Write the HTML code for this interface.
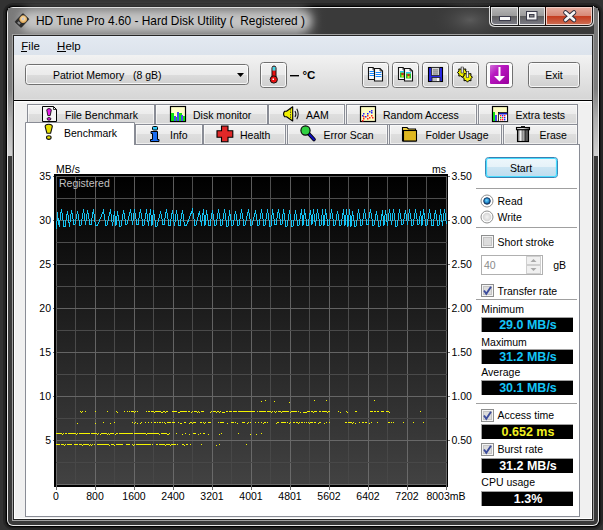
<!DOCTYPE html><html><head><meta charset="utf-8"><style>html,body{margin:0;padding:0;width:603px;height:530px;overflow:hidden;background:#313131}</style></head><body><svg width="603" height="530" viewBox="0 0 603 530" style="display:block;white-space:pre;font-family:'Liberation Sans', sans-serif">

<defs>
<linearGradient id="gChart" x1="0" y1="0" x2="0" y2="1"><stop offset="0" stop-color="#000"/><stop offset="1" stop-color="#424242"/></linearGradient>
<linearGradient id="gSide" x1="0" y1="0" x2="0" y2="1"><stop offset="0" stop-color="#7a7a7a"/><stop offset="1" stop-color="#cdcdcd"/></linearGradient>
<linearGradient id="gMenu" x1="0" y1="0" x2="0" y2="1"><stop offset="0" stop-color="#e3e9f1"/><stop offset="1" stop-color="#dce3ec"/></linearGradient>
<linearGradient id="gTool" x1="0" y1="0" x2="0" y2="1"><stop offset="0" stop-color="#f2f2f2"/><stop offset="1" stop-color="#d5d5d5"/></linearGradient>
<linearGradient id="gBtn" x1="0" y1="0" x2="0" y2="1"><stop offset="0" stop-color="#f2f2f2"/><stop offset="0.5" stop-color="#ebebeb"/><stop offset="0.5" stop-color="#dddddd"/><stop offset="1" stop-color="#cfcfcf"/></linearGradient>
<linearGradient id="gTab" x1="0" y1="0" x2="0" y2="1"><stop offset="0" stop-color="#f3f3f3"/><stop offset="0.5" stop-color="#ebebeb"/><stop offset="0.5" stop-color="#dedede"/><stop offset="1" stop-color="#d6d6d6"/></linearGradient>
<linearGradient id="gStart" x1="0" y1="0" x2="0" y2="1"><stop offset="0" stop-color="#eef7fc"/><stop offset="0.45" stop-color="#e6f2f9"/><stop offset="0.5" stop-color="#cce5f3"/><stop offset="1" stop-color="#bddcee"/></linearGradient>
<linearGradient id="gClose" x1="0" y1="0" x2="0" y2="1"><stop offset="0" stop-color="#e8a493"/><stop offset="0.45" stop-color="#d5735c"/><stop offset="0.55" stop-color="#c23c1c"/><stop offset="1" stop-color="#d8785a"/></linearGradient>
<linearGradient id="gMinMax" x1="0" y1="0" x2="0" y2="1"><stop offset="0" stop-color="#a4a4a4"/><stop offset="0.45" stop-color="#8c8c8c"/><stop offset="0.55" stop-color="#5a5a5a"/><stop offset="1" stop-color="#7a7a80"/></linearGradient>
<filter id="blur6" x="-50%" y="-50%" width="200%" height="200%"><feGaussianBlur stdDeviation="5"/></filter>
<radialGradient id="gDisk" cx="0.45" cy="0.45" r="0.55"><stop offset="0" stop-color="#c8ccd8"/><stop offset="0.25" stop-color="#c0c4d0"/><stop offset="0.35" stop-color="#f8d8a0"/><stop offset="1" stop-color="#d8a050"/></radialGradient>
</defs>
<rect x="0" y="0" width="603" height="530" fill="#323232" />
<rect x="3" y="3" width="600" height="527" rx="10" fill="#262626"/>
<rect x="5" y="5" width="596" height="523" rx="8" fill="#1a1a1a"/>
<rect x="6" y="6" width="594" height="521" rx="7" fill="#000"/>
<rect x="7" y="7" width="592" height="519" rx="6" fill="#e8e8e8"/>
<rect x="8" y="8" width="590" height="517" rx="5" fill="#3a3a3a"/>
<defs><linearGradient id="gSide2" gradientUnits="userSpaceOnUse" x1="0" y1="8" x2="0" y2="155"><stop offset="0" stop-color="#787878"/><stop offset="0.55" stop-color="#7e7e7e"/><stop offset="0.75" stop-color="#adadad"/><stop offset="1" stop-color="#d0d0d0"/></linearGradient><radialGradient id="gStreak" cx="0.5" cy="0.5" r="0.5"><stop offset="0" stop-color="#5a5a5a"/><stop offset="1" stop-color="#3a3a3a" stop-opacity="0"/></radialGradient><linearGradient id="gMM" x1="0" y1="0" x2="0" y2="1"><stop offset="0" stop-color="#b4b4b4"/><stop offset="0.47" stop-color="#9c9c9c"/><stop offset="0.5" stop-color="#5c5c5c"/><stop offset="1" stop-color="#7a7a84"/></linearGradient><linearGradient id="gCl" x1="0" y1="0" x2="0" y2="1"><stop offset="0" stop-color="#e4aa9c"/><stop offset="0.47" stop-color="#d88a78"/><stop offset="0.5" stop-color="#c43a1c"/><stop offset="1" stop-color="#cc6a50"/></linearGradient></defs>
<path d="M8 13 a5 5 0 0 1 5 -5 V156 H8 Z" fill="url(#gSide2)"/>
<rect x="8" y="8" width="4" height="148" fill="url(#gSide2)" />
<rect x="594" y="8" width="4" height="148" fill="url(#gSide2)" />
<ellipse cx="470" cy="20" rx="40" ry="22" fill="url(#gStreak)"/>
<defs><linearGradient id="gTB" x1="0" y1="0" x2="1" y2="0"><stop offset="0" stop-color="#7a7a7a"/><stop offset="0.9" stop-color="#6a6a6a"/><stop offset="1" stop-color="#3a3a3a" stop-opacity="0"/></linearGradient></defs>
<rect x="8" y="8" width="320" height="26" fill="url(#gTB)" />
<rect x="20" y="10" width="292" height="22" rx="11" fill="#c4c4c4" filter="url(#blur6)"/>
<rect x="12" y="34" width="582" height="487" fill="#a0a0a0" />
<rect x="13" y="35" width="580" height="485" fill="#252525" />
<rect x="14" y="36" width="578" height="483" fill="#ffffff" />
<rect x="15" y="37" width="576" height="481" fill="#f0f0f0" />
<rect x="14" y="36" width="578" height="1" fill="#e9eff8" />
<rect x="14" y="37" width="578" height="18" fill="url(#gMenu)" />
<rect x="14" y="55" width="578" height="45" fill="url(#gTool)" />
<rect x="14" y="99" width="578" height="1" fill="#e2e2e2" />
<rect x="14" y="100" width="578" height="1" fill="#000" />
<rect x="14" y="101" width="578" height="1" fill="#fff" />
<rect x="14" y="102" width="578" height="1" fill="#f5f5f5" />
<text x="36" y="24.7" font-size="11.9" fill="#000" font-weight="400" text-anchor="start" >HD Tune Pro 4.60 - Hard Disk Utility ( &#160;Registered )</text>
<g transform="translate(22,20.5) rotate(43)"><rect x="-4.2" y="-5.8" width="8.4" height="11.6" rx="0.8" fill="#2c2c2c" stroke="#1a1a1a" stroke-width="0.6"/><circle cx="0" cy="-1.8" r="3.7" fill="url(#gDisk)"/><rect x="-2" y="2.8" width="3" height="2.2" fill="#888"/></g>
<path d="M489 6 H594 V22 a5 5 0 0 1 -5 5 H494 a5 5 0 0 1 -5 -5 Z" fill="#d8d8d8"/>
<path d="M490 6 H593 V21 a5 5 0 0 1 -5 5 H495 a5 5 0 0 1 -5 -5 Z" fill="#1a1a1a"/>
<rect x="490" y="6" width="103" height="1" fill="#000" />
<path d="M491 7 H518 V25 H495 a4 4 0 0 1 -4 -4 Z" fill="#e6e6e6"/>
<path d="M492 8 H517 V24 H495 a3 3 0 0 1 -3 -3 Z" fill="url(#gMM)"/>
<rect x="518" y="7" width="1" height="19" fill="#1a1a1a" />
<rect x="519" y="7" width="26" height="18" fill="#e6e6e6" />
<rect x="520" y="8" width="24" height="16" fill="url(#gMM)" />
<rect x="545" y="7" width="1" height="19" fill="#2a0a04" />
<path d="M546 7 H592 V21 a4 4 0 0 1 -4 4 H546 Z" fill="#f0d0c8"/>
<path d="M547 8 H591 V21 a3 3 0 0 1 -3 3 H547 Z" fill="url(#gCl)"/>
<rect x="499" y="16" width="12" height="5" fill="#3a3a4a" />
<rect x="500" y="17" width="10" height="3" fill="#f8f8f8" />
<rect x="526" y="11" width="11.5" height="9.5" fill="#3a3a4a"/>
<rect x="527" y="12" width="9.5" height="7.5" fill="#f4f4f4" />
<rect x="529" y="14" width="5.5" height="3.5" fill="#3a3a4a" />
<rect x="530" y="15" width="3.5" height="1.5" fill="#8a8a8a" />
<path d="M565.5 12.5 L574 20 M574 12.5 L565.5 20" stroke="#2a2a3a" stroke-width="4.6" stroke-linecap="round"/>
<path d="M565.5 12.5 L574 20 M574 12.5 L565.5 20" stroke="#f6f6f6" stroke-width="2.8" stroke-linecap="round"/>
<text x="21.3" y="49.9" font-size="11.5" fill="#000" font-weight="400" text-anchor="start" >File</text>
<rect x="21" y="51" width="6" height="1" fill="#000" />
<text x="57.1" y="49.9" font-size="11.5" fill="#000" font-weight="400" text-anchor="start" >Help</text>
<rect x="57" y="51" width="9" height="1" fill="#000" />
<rect x="25.5" y="64.5" width="223" height="20" rx="3" fill="url(#gBtn)" stroke="#707070"/>
<rect x="26.5" y="65.5" width="221" height="18" rx="2" fill="none" stroke="#fff" stroke-opacity="0.8"/>
<text x="53" y="78.9" font-size="10.5" fill="#000" font-weight="400" text-anchor="start" >Patriot Memory &#160; (8 gB)</text>
<path d="M237 73 L244 73 L240.5 77 Z" fill="#000"/>
<rect x="260.5" y="62.5" width="26" height="25" rx="3" fill="url(#gBtn)" stroke="#707070"/>
<rect x="261.5" y="63.5" width="24" height="23" rx="2" fill="none" stroke="#fff" stroke-opacity="0.8"/>
<path d="M272 78 V68 a2 2 0 0 1 4 0 V78" fill="#e81010" stroke="#111" stroke-width="1"/>
<rect x="272.5" y="66.8" width="3" height="3.8" fill="#40d8e8"/>
<circle cx="273.8" cy="79.5" r="3.6" fill="#e81010" stroke="#111" stroke-width="1"/>
<rect x="272.5" y="78.5" width="1.5" height="1.5" fill="#fff" />
<rect x="290" y="75" width="9" height="1.4" fill="#000" />
<text x="302.5" y="79.4" font-size="11.5" fill="#000" font-weight="700" text-anchor="start" >°C</text>
<rect x="362.5" y="62.5" width="26" height="25" rx="3" fill="url(#gBtn)" stroke="#707070"/>
<rect x="363.5" y="63.5" width="24" height="23" rx="2" fill="none" stroke="#fff" stroke-opacity="0.8"/>
<rect x="392.5" y="62.5" width="26" height="25" rx="3" fill="url(#gBtn)" stroke="#707070"/>
<rect x="393.5" y="63.5" width="24" height="23" rx="2" fill="none" stroke="#fff" stroke-opacity="0.8"/>
<rect x="422.5" y="62.5" width="26" height="25" rx="3" fill="url(#gBtn)" stroke="#707070"/>
<rect x="423.5" y="63.5" width="24" height="23" rx="2" fill="none" stroke="#fff" stroke-opacity="0.8"/>
<rect x="452.5" y="62.5" width="26" height="25" rx="3" fill="url(#gBtn)" stroke="#707070"/>
<rect x="453.5" y="63.5" width="24" height="23" rx="2" fill="none" stroke="#fff" stroke-opacity="0.8"/>
<rect x="486.5" y="62.5" width="26" height="25" rx="3" fill="#fbfbfb" stroke="#707070"/>
<rect x="487.5" y="63.5" width="24" height="23" rx="2" fill="none" stroke="#fff" stroke-opacity="0.8"/>
<defs><linearGradient id="gPurp" x1="0" y1="0" x2="1" y2="1"><stop offset="0" stop-color="#d070d8"/><stop offset="0.35" stop-color="#b818c0"/><stop offset="1" stop-color="#9a009e"/></linearGradient><linearGradient id="gGear" x1="0" y1="0" x2="1" y2="0"><stop offset="0" stop-color="#808080"/><stop offset="0.5" stop-color="#f4f4f4"/><stop offset="1" stop-color="#707070"/></linearGradient></defs>
<path d="M368.5 67.5 H373 L375.5 70 V79.5 H368.5 Z" fill="#fafafa" stroke="#111" stroke-width="1.1"/>
<path d="M373 67.5 V70 H375.5" fill="none" stroke="#111" stroke-width="0.7"/>
<line x1="370" y1="71.5" x2="374" y2="71.5" stroke="#1a88ff" stroke-width="1.1" stroke-linecap="round"/>
<line x1="370" y1="73.5" x2="374" y2="73.5" stroke="#1a88ff" stroke-width="1.1" stroke-linecap="round"/>
<line x1="370" y1="75.5" x2="374" y2="75.5" stroke="#1a88ff" stroke-width="1.1" stroke-linecap="round"/>
<path d="M374.5 68.5 H380 L382.5 71 V81.0 H374.5 Z" fill="#fafafa" stroke="#111" stroke-width="1.1"/>
<path d="M380 68.5 V71 H382.5" fill="none" stroke="#111" stroke-width="0.7"/>
<line x1="376" y1="72.5" x2="381" y2="72.5" stroke="#1a88ff" stroke-width="1.1" stroke-linecap="round"/>
<line x1="376" y1="74.5" x2="381" y2="74.5" stroke="#1a88ff" stroke-width="1.1" stroke-linecap="round"/>
<line x1="376" y1="76.5" x2="381" y2="76.5" stroke="#1a88ff" stroke-width="1.1" stroke-linecap="round"/>
<path d="M398.5 67.5 H403 L405.5 70 V79.5 H398.5 Z" fill="#fafafa" stroke="#111" stroke-width="1.1"/>
<path d="M403 67.5 V70 H405.5" fill="none" stroke="#111" stroke-width="0.7"/>
<rect x="400" y="71" width="4" height="1.5" fill="#30c8f0" />
<rect x="400" y="72.5" width="4" height="5" fill="#20c020" />
<rect x="401.5" y="73" width="2" height="2" fill="#e02020" />
<rect x="401.5" y="75" width="2" height="2" fill="#d8d820" />
<path d="M404.5 68.5 H410 L412.5 71 V81.0 H404.5 Z" fill="#fafafa" stroke="#111" stroke-width="1.1"/>
<path d="M410 68.5 V71 H412.5" fill="none" stroke="#111" stroke-width="0.7"/>
<rect x="406" y="72" width="5" height="1.5" fill="#30c8f0" />
<rect x="406" y="73.5" width="5" height="5" fill="#20c020" />
<rect x="407.5" y="74" width="2" height="2" fill="#e02020" />
<rect x="407.5" y="76" width="2" height="2" fill="#d8d820" />
<rect x="428.5" y="67.5" width="14" height="14" fill="#2828e8" stroke="#000" stroke-width="1.1"/>
<rect x="431.5" y="67.5" width="8" height="8" fill="#d4d4d4" stroke="#222" stroke-width="0.8"/>
<rect x="433" y="69.5" width="5" height="0.9" fill="#666" />
<rect x="433" y="71.5" width="5" height="0.9" fill="#666" />
<rect x="433" y="73.5" width="5" height="0.9" fill="#666" />
<rect x="432" y="77.5" width="8" height="4" fill="#c0c0c0" stroke="#222" stroke-width="0.8"/>
<rect x="437" y="78" width="2" height="3" fill="#fff" />
<polygon points="467.30,72.50 465.63,73.88 465.84,76.04 463.68,75.83 462.30,77.50 460.92,75.83 458.76,76.04 458.97,73.88 457.30,72.50 458.97,71.12 458.76,68.96 460.92,69.17 462.30,67.50 463.68,69.17 465.84,68.96 465.63,71.12" fill="#f0f000" stroke="#000" stroke-width="1"/>
<rect x="461.0" y="67.0" width="2.6" height="6" fill="url(#gGear)" stroke="#222" stroke-width="0.5"/>
<polygon points="472.50,77.20 470.83,78.58 471.04,80.74 468.88,80.53 467.50,82.20 466.12,80.53 463.96,80.74 464.17,78.58 462.50,77.20 464.17,75.82 463.96,73.66 466.12,73.87 467.50,72.20 468.88,73.87 471.04,73.66 470.83,75.82" fill="#f0f000" stroke="#000" stroke-width="1"/>
<rect x="466.2" y="71.7" width="2.6" height="6" fill="url(#gGear)" stroke="#222" stroke-width="0.5"/>
<rect x="490" y="65" width="19" height="19" rx="1" fill="url(#gPurp)"/>
<path d="M498.5 67 H500.5 V76 H505 L499.5 81.5 L494 76 H498.5 Z" fill="#fff"/>
<rect x="528.5" y="62.5" width="51" height="25" rx="3" fill="url(#gBtn)" stroke="#707070"/>
<rect x="529.5" y="63.5" width="49" height="23" rx="2" fill="none" stroke="#fff" stroke-opacity="0.8"/>
<text x="554" y="78.5" font-size="10.5" fill="#000" font-weight="400" text-anchor="middle" >Exit</text>
<rect x="25" y="144" width="555" height="373" fill="#fff" />
<rect x="25.5" y="144.5" width="554" height="372" fill="none" stroke="#898c95"/>
<rect x="27.5" y="104.5" width="127" height="20" fill="url(#gTab)" stroke="#898c95"/>
<rect x="28.5" y="105.5" width="125" height="18" fill="none" stroke="#fff" stroke-opacity="0.6"/>
<text x="65" y="118.7" font-size="10.5" fill="#000" font-weight="400" text-anchor="start" >File Benchmark</text>
<rect x="155.5" y="104.5" width="112" height="20" fill="url(#gTab)" stroke="#898c95"/>
<rect x="156.5" y="105.5" width="110" height="18" fill="none" stroke="#fff" stroke-opacity="0.6"/>
<text x="193" y="118.7" font-size="10.5" fill="#000" font-weight="400" text-anchor="start" >Disk monitor</text>
<rect x="268.5" y="104.5" width="76" height="20" fill="url(#gTab)" stroke="#898c95"/>
<rect x="269.5" y="105.5" width="74" height="18" fill="none" stroke="#fff" stroke-opacity="0.6"/>
<text x="306" y="118.7" font-size="10.5" fill="#000" font-weight="400" text-anchor="start" >AAM</text>
<rect x="346.5" y="104.5" width="130" height="20" fill="url(#gTab)" stroke="#898c95"/>
<rect x="347.5" y="105.5" width="128" height="18" fill="none" stroke="#fff" stroke-opacity="0.6"/>
<text x="383" y="118.7" font-size="10.5" fill="#000" font-weight="400" text-anchor="start" >Random Access</text>
<rect x="478.5" y="104.5" width="99" height="20" fill="url(#gTab)" stroke="#898c95"/>
<rect x="479.5" y="105.5" width="97" height="18" fill="none" stroke="#fff" stroke-opacity="0.6"/>
<text x="515.5" y="118.7" font-size="10.5" fill="#000" font-weight="400" text-anchor="start" >Extra tests</text>
<rect x="135.5" y="124.5" width="67" height="20" fill="url(#gTab)" stroke="#898c95"/>
<rect x="136.5" y="125.5" width="65" height="18" fill="none" stroke="#fff" stroke-opacity="0.6"/>
<text x="170" y="138.7" font-size="10.5" fill="#000" font-weight="400" text-anchor="start" >Info</text>
<rect x="203.5" y="124.5" width="82" height="20" fill="url(#gTab)" stroke="#898c95"/>
<rect x="204.5" y="125.5" width="80" height="18" fill="none" stroke="#fff" stroke-opacity="0.6"/>
<text x="240" y="138.7" font-size="10.5" fill="#000" font-weight="400" text-anchor="start" >Health</text>
<rect x="287.5" y="124.5" width="100" height="20" fill="url(#gTab)" stroke="#898c95"/>
<rect x="288.5" y="125.5" width="98" height="18" fill="none" stroke="#fff" stroke-opacity="0.6"/>
<text x="323.5" y="138.7" font-size="10.5" fill="#000" font-weight="400" text-anchor="start" >Error Scan</text>
<rect x="389.5" y="124.5" width="112" height="20" fill="url(#gTab)" stroke="#898c95"/>
<rect x="390.5" y="125.5" width="110" height="18" fill="none" stroke="#fff" stroke-opacity="0.6"/>
<text x="425.5" y="138.7" font-size="10.5" fill="#000" font-weight="400" text-anchor="start" >Folder Usage</text>
<rect x="503.5" y="124.5" width="74" height="20" fill="url(#gTab)" stroke="#898c95"/>
<rect x="504.5" y="125.5" width="72" height="18" fill="none" stroke="#fff" stroke-opacity="0.6"/>
<text x="539.5" y="138.7" font-size="10.5" fill="#000" font-weight="400" text-anchor="start" >Erase</text>
<path d="M25.5 145 V122.5 H134.5 V145" fill="#fff" stroke="#898c95"/>
<rect x="26" y="123" width="108" height="23" fill="#fff" />
<text x="64" y="136.5" font-size="10.5" fill="#000" font-weight="400" text-anchor="start" >Benchmark</text>
<path d="M42.5 106.5 H53.5 L56.5 109.5 V121.5 H42.5 Z" fill="#f4f4f4" stroke="#000"/>
<path d="M53.5 106.5 V109.5 H56.5" fill="none" stroke="#000" stroke-width="0.8"/>
<path d="M46.8 110.2 Q46.8 108.6 49 108.6 Q51.3 108.6 51.3 110.2 L50.2 115.6 H47.8 Z" fill="#e818e8" stroke="#111" stroke-width="0.9"/>
<ellipse cx="49" cy="118.9" rx="1.9" ry="1.3" fill="#e818e8" stroke="#111" stroke-width="0.9"/>
<path d="M45.2 126.6 Q45.2 124.3 48.7 124.3 Q52.3 124.3 52.3 126.6 L50.6 133.2 H46.9 Z" fill="#e8e000" stroke="#111" stroke-width="1.1"/>
<ellipse cx="48.8" cy="137.6" rx="2.3" ry="1.8" fill="#e8e000" stroke="#111" stroke-width="1.1"/>
<rect x="170.5" y="106.5" width="15" height="15" fill="#ffffc8" stroke="#000" stroke-width="1.2"/>
<rect x="171" y="113" width="3" height="8" fill="#10e010" />
<rect x="174" y="116" width="2" height="5" fill="#4848f0" />
<rect x="176" y="117" width="2" height="4" fill="#10e010" />
<rect x="177" y="112" width="2" height="9" fill="#4848f0" />
<rect x="179" y="113" width="3" height="8" fill="#10e010" />
<rect x="181" y="115" width="2" height="6" fill="#4848f0" />
<rect x="183" y="116" width="2" height="5" fill="#10e010" />
<path d="M284.5 111.3 Q282.6 114 284.5 116.7 H286.5 L292.7 121 V106.8 L286.5 111.3 Z" fill="#f0f000" stroke="#000" stroke-width="1.1" stroke-linejoin="round"/>
<line x1="290.5" y1="109" x2="290.5" y2="119" stroke="#333" stroke-width="0.8" stroke-dasharray="1.5 1"/>
<path d="M295 111 Q296.8 114 295 117 M296.8 108.8 Q299.6 114 296.8 119.2" fill="none" stroke="#1a1a1a" stroke-width="1.1"/>
<rect x="360.5" y="106.5" width="15" height="15" fill="#fdfcc0" stroke="#000" stroke-width="1.2"/>
<rect x="363" y="113" width="1.5" height="1.5" fill="#2020ff" />
<rect x="362" y="115" width="1.5" height="1.5" fill="#2020ff" />
<rect x="365" y="116" width="1.5" height="1.5" fill="#2020ff" />
<rect x="367" y="113" width="1.5" height="1.5" fill="#2020ff" />
<rect x="369" y="111" width="1.5" height="1.5" fill="#2020ff" />
<rect x="371" y="110" width="1.5" height="1.5" fill="#2020ff" />
<rect x="371" y="112" width="1.5" height="1.5" fill="#2020ff" />
<rect x="363" y="116" width="1.5" height="1.5" fill="#ff2020" />
<rect x="363" y="118" width="1.5" height="1.5" fill="#ff2020" />
<rect x="367" y="115" width="1.5" height="1.5" fill="#ff2020" />
<rect x="367" y="118" width="1.5" height="1.5" fill="#ff2020" />
<rect x="369" y="117" width="1.5" height="1.5" fill="#ff2020" />
<rect x="371" y="115" width="1.5" height="1.5" fill="#ff2020" />
<rect x="372" y="117" width="1.5" height="1.5" fill="#ff2020" />
<rect x="362" y="120" width="1.5" height="1.5" fill="#ff2020" />
<rect x="492.5" y="106.5" width="15" height="15" fill="#fdfcc0" stroke="#000" stroke-width="1.2"/>
<rect x="493" y="112" width="2" height="9" fill="#10e010" />
<rect x="495" y="115" width="2" height="6" fill="#4848f0" />
<rect x="498.5" y="112.5" width="9" height="9" fill="#fff" stroke="#000" stroke-width="0.8"/>
<rect x="499" y="113" width="8" height="1.5" fill="#1010c0" />
<rect x="500" y="115" width="1.4" height="1.4" fill="#ff2020" />
<rect x="500" y="117" width="1.4" height="1.4" fill="#10c010" />
<rect x="500" y="119" width="1.4" height="1.4" fill="#ff2020" />
<rect x="502" y="115" width="1.4" height="1.4" fill="#2020ff" />
<rect x="502" y="117" width="1.4" height="1.4" fill="#ff2020" />
<rect x="502" y="119" width="1.4" height="1.4" fill="#ff2020" />
<rect x="504" y="115" width="1.4" height="1.4" fill="#ff2020" />
<rect x="504" y="117" width="1.4" height="1.4" fill="#2020ff" />
<rect x="504" y="119" width="1.4" height="1.4" fill="#2020ff" />
<path d="M151 131.5 H157.5 V139.5 H159 V141.5 H150.5 V139.5 H152.5 V133.5 H151 Z" fill="#1a6cf0" stroke="#000" stroke-width="1"/>
<rect x="152.5" y="126.5" width="5" height="3.5" rx="1" fill="#30c8f8" stroke="#000" stroke-width="1"/>
<path d="M221.5 126 H228 V130.8 H232.8 V137.2 H228 V141.7 H221.5 V137.2 H217 V130.8 H221.5 Z" fill="#e02828" stroke="#000" stroke-width="1.1"/>
<line x1="308.5" y1="133.5" x2="314" y2="139.5" stroke="#000" stroke-width="3.6" stroke-linecap="round"/>
<line x1="308.5" y1="133.5" x2="314" y2="139.5" stroke="#1010b8" stroke-width="2" stroke-linecap="round"/>
<circle cx="305.5" cy="130.5" r="4.6" fill="#30d040" stroke="#000" stroke-width="1.1"/>
<path d="M402.5 127.5 H407 L408.5 129 H415.5 V141 H402.5 Z" fill="#f0d040" stroke="#000" stroke-width="1.1"/>
<rect x="403.5" y="130.5" width="13" height="10.5" fill="#e0b820" stroke="#000" stroke-width="1.1"/>
<defs><linearGradient id="gTrash" x1="0" y1="0" x2="1" y2="0"><stop offset="0" stop-color="#505050"/><stop offset="0.18" stop-color="#c0c0c0"/><stop offset="0.3" stop-color="#ffffff"/><stop offset="0.42" stop-color="#808080"/><stop offset="0.55" stop-color="#a8a8a8"/><stop offset="0.72" stop-color="#383838"/><stop offset="0.86" stop-color="#686868"/><stop offset="1" stop-color="#303030"/></linearGradient><linearGradient id="gLid" x1="0" y1="0" x2="1" y2="0"><stop offset="0" stop-color="#c8c8c8"/><stop offset="0.5" stop-color="#e8e8e8"/><stop offset="1" stop-color="#505050"/></linearGradient></defs>
<rect x="517.5" y="129.5" width="11" height="12" fill="url(#gTrash)" stroke="#000" stroke-width="1.1"/>
<rect x="516.5" y="127.5" width="13" height="2.2" fill="url(#gLid)" stroke="#000" stroke-width="1.1"/>
<rect x="521" y="126" width="4" height="1.6" fill="#111" />
<rect x="54" y="174" width="394" height="313" fill="#000" />
<rect x="56" y="176" width="390" height="309" fill="url(#gChart)" />
<defs><linearGradient id="gMaj" gradientUnits="userSpaceOnUse" x1="0" y1="176" x2="0" y2="484"><stop offset="0" stop-color="#5c5c5c"/><stop offset="1" stop-color="#6a6a6a"/></linearGradient><linearGradient id="gMin" gradientUnits="userSpaceOnUse" x1="0" y1="176" x2="0" y2="484"><stop offset="0" stop-color="#4e4e4e"/><stop offset="1" stop-color="#474747"/></linearGradient></defs>
<rect x="56" y="176" width="1" height="309" fill="url(#gMaj)" />
<rect x="75" y="176" width="1" height="309" fill="url(#gMin)" />
<rect x="95" y="176" width="1" height="309" fill="url(#gMaj)" />
<rect x="114" y="176" width="1" height="309" fill="url(#gMin)" />
<rect x="134" y="176" width="1" height="309" fill="url(#gMaj)" />
<rect x="153" y="176" width="1" height="309" fill="url(#gMin)" />
<rect x="173" y="176" width="1" height="309" fill="url(#gMaj)" />
<rect x="192" y="176" width="1" height="309" fill="url(#gMin)" />
<rect x="212" y="176" width="1" height="309" fill="url(#gMaj)" />
<rect x="231" y="176" width="1" height="309" fill="url(#gMin)" />
<rect x="251" y="176" width="1" height="309" fill="url(#gMaj)" />
<rect x="270" y="176" width="1" height="309" fill="url(#gMin)" />
<rect x="290" y="176" width="1" height="309" fill="url(#gMaj)" />
<rect x="309" y="176" width="1" height="309" fill="url(#gMin)" />
<rect x="329" y="176" width="1" height="309" fill="url(#gMaj)" />
<rect x="348" y="176" width="1" height="309" fill="url(#gMin)" />
<rect x="368" y="176" width="1" height="309" fill="url(#gMaj)" />
<rect x="387" y="176" width="1" height="309" fill="url(#gMin)" />
<rect x="407" y="176" width="1" height="309" fill="url(#gMaj)" />
<rect x="426" y="176" width="1" height="309" fill="url(#gMin)" />
<rect x="446" y="176" width="1" height="309" fill="url(#gMaj)" />
<rect x="53" y="176" width="397" height="1" fill="#5c5c5c" />
<rect x="56" y="198" width="391" height="1" fill="#4e4e4e" />
<rect x="53" y="220" width="397" height="1" fill="#5e5e5e" />
<rect x="56" y="242" width="391" height="1" fill="#4c4c4c" />
<rect x="53" y="264" width="397" height="1" fill="#606060" />
<rect x="56" y="286" width="391" height="1" fill="#4c4c4c" />
<rect x="53" y="308" width="397" height="1" fill="#626262" />
<rect x="56" y="330" width="391" height="1" fill="#4a4a4a" />
<rect x="53" y="352" width="397" height="1" fill="#646464" />
<rect x="56" y="374" width="391" height="1" fill="#4a4a4a" />
<rect x="53" y="396" width="397" height="1" fill="#666666" />
<rect x="56" y="418" width="391" height="1" fill="#484848" />
<rect x="53" y="440" width="397" height="1" fill="#686868" />
<rect x="56" y="462" width="391" height="1" fill="#484848" />
<rect x="56" y="484" width="391" height="1" fill="#6a6a6a" />
<rect x="54" y="174" width="394" height="2" fill="#000" />
<rect x="54" y="176" width="2" height="309" fill="#000" />
<rect x="447" y="174" width="1" height="313" fill="#000" />
<rect x="54" y="485" width="393" height="2" fill="#000" />
<rect x="53" y="176" width="1" height="1" fill="#707070" />
<rect x="448" y="176" width="2" height="1" fill="#707070" />
<rect x="53" y="220" width="1" height="1" fill="#707070" />
<rect x="448" y="220" width="2" height="1" fill="#707070" />
<rect x="53" y="264" width="1" height="1" fill="#707070" />
<rect x="448" y="264" width="2" height="1" fill="#707070" />
<rect x="53" y="308" width="1" height="1" fill="#707070" />
<rect x="448" y="308" width="2" height="1" fill="#707070" />
<rect x="53" y="352" width="1" height="1" fill="#707070" />
<rect x="448" y="352" width="2" height="1" fill="#707070" />
<rect x="53" y="396" width="1" height="1" fill="#707070" />
<rect x="448" y="396" width="2" height="1" fill="#707070" />
<rect x="53" y="440" width="1" height="1" fill="#707070" />
<rect x="448" y="440" width="2" height="1" fill="#707070" />
<rect x="56" y="485" width="1" height="5" fill="#6a6a6a" />
<rect x="95" y="485" width="1" height="5" fill="#6a6a6a" />
<rect x="134" y="485" width="1" height="5" fill="#6a6a6a" />
<rect x="173" y="485" width="1" height="5" fill="#6a6a6a" />
<rect x="212" y="485" width="1" height="5" fill="#6a6a6a" />
<rect x="251" y="485" width="1" height="5" fill="#6a6a6a" />
<rect x="290" y="485" width="1" height="5" fill="#6a6a6a" />
<rect x="329" y="485" width="1" height="5" fill="#6a6a6a" />
<rect x="368" y="485" width="1" height="5" fill="#6a6a6a" />
<rect x="407" y="485" width="1" height="5" fill="#6a6a6a" />
<rect x="446" y="485" width="1" height="5" fill="#6a6a6a" />
<text x="51" y="179.7" font-size="10.5" fill="#000" font-weight="400" text-anchor="end" >35</text>
<text x="451.5" y="179.7" font-size="10.5" fill="#000" font-weight="400" text-anchor="start" >3.50</text>
<text x="51" y="223.7" font-size="10.5" fill="#000" font-weight="400" text-anchor="end" >30</text>
<text x="451.5" y="223.7" font-size="10.5" fill="#000" font-weight="400" text-anchor="start" >3.00</text>
<text x="51" y="267.7" font-size="10.5" fill="#000" font-weight="400" text-anchor="end" >25</text>
<text x="451.5" y="267.7" font-size="10.5" fill="#000" font-weight="400" text-anchor="start" >2.50</text>
<text x="51" y="311.7" font-size="10.5" fill="#000" font-weight="400" text-anchor="end" >20</text>
<text x="451.5" y="311.7" font-size="10.5" fill="#000" font-weight="400" text-anchor="start" >2.00</text>
<text x="51" y="355.7" font-size="10.5" fill="#000" font-weight="400" text-anchor="end" >15</text>
<text x="451.5" y="355.7" font-size="10.5" fill="#000" font-weight="400" text-anchor="start" >1.50</text>
<text x="51" y="399.7" font-size="10.5" fill="#000" font-weight="400" text-anchor="end" >10</text>
<text x="451.5" y="399.7" font-size="10.5" fill="#000" font-weight="400" text-anchor="start" >1.00</text>
<text x="51" y="443.7" font-size="10.5" fill="#000" font-weight="400" text-anchor="end" >5</text>
<text x="451.5" y="443.7" font-size="10.5" fill="#000" font-weight="400" text-anchor="start" >0.50</text>
<text x="56" y="172.9" font-size="10.5" fill="#000" font-weight="400" text-anchor="start" >MB/s</text>
<text x="446" y="172.9" font-size="10.5" fill="#000" font-weight="400" text-anchor="end" >ms</text>
<text x="56" y="500" font-size="10.5" fill="#000" font-weight="400" text-anchor="middle" >0</text>
<text x="95" y="500" font-size="10.5" fill="#000" font-weight="400" text-anchor="middle" >800</text>
<text x="134" y="500" font-size="10.5" fill="#000" font-weight="400" text-anchor="middle" >1600</text>
<text x="173" y="500" font-size="10.5" fill="#000" font-weight="400" text-anchor="middle" >2400</text>
<text x="212" y="500" font-size="10.5" fill="#000" font-weight="400" text-anchor="middle" >3201</text>
<text x="251" y="500" font-size="10.5" fill="#000" font-weight="400" text-anchor="middle" >4001</text>
<text x="290" y="500" font-size="10.5" fill="#000" font-weight="400" text-anchor="middle" >4801</text>
<text x="329" y="500" font-size="10.5" fill="#000" font-weight="400" text-anchor="middle" >5602</text>
<text x="368" y="500" font-size="10.5" fill="#000" font-weight="400" text-anchor="middle" >6402</text>
<text x="407" y="500" font-size="10.5" fill="#000" font-weight="400" text-anchor="middle" >7202</text>
<text x="446" y="500" font-size="10.5" fill="#000" font-weight="400" text-anchor="middle" >8003mB</text>
<text x="59" y="186.8" font-size="10.5" fill="#c0c0c0" font-weight="400" text-anchor="start" >Registered</text>
<polyline fill="none" stroke="#14c4f4" stroke-width="1" shape-rendering="crispEdges" points="56.5,229.5 57.5,212.5 58.5,222.5 59.5,226.5 60.5,214.5 61.5,209.5 64.0,226.5 65.0,226.5 67.5,211.5 69.5,226.5 71.5,210.5 74.0,224.5 75.0,224.5 77.5,211.5 80.0,225.5 81.0,225.5 83.5,209.5 85.5,224.5 87.5,210.5 90.0,224.5 91.0,224.5 93.5,209.5 95.5,225.5 97.5,225.5 103.5,210.5 106.0,225.5 107.0,225.5 110.5,209.5 112.5,225.5 114.5,211.5 116.0,225.5 117.5,211.5 120.0,226.5 121.0,226.5 123.5,210.5 126.0,224.5 127.0,224.5 130.5,209.5 132.5,224.5 134.5,209.5 137.0,224.5 138.0,224.5 140.5,209.5 143.0,225.5 144.0,225.5 146.5,209.5 148.5,225.5 150.5,209.5 152.0,225.5 153.5,210.5 156.0,226.5 157.0,226.5 160.5,211.5 163.0,224.5 164.0,224.5 166.5,209.5 169.0,225.5 170.0,225.5 172.5,210.5 174.5,225.5 176.5,210.5 179.0,225.5 180.0,225.5 182.5,210.5 184.5,225.5 186.5,225.5 192.5,209.5 195.0,225.5 196.0,225.5 199.5,211.5 201.5,225.5 203.5,209.5 205.0,225.5 206.5,210.5 209.0,225.5 210.0,225.5 212.5,210.5 215.0,225.5 216.0,225.5 218.5,209.5 221.0,225.5 222.0,225.5 224.5,209.5 227.0,226.5 228.0,226.5 229.5,210.5 232.0,225.5 233.0,225.5 235.5,211.5 238.0,225.5 239.0,225.5 241.5,209.5 244.0,225.5 245.0,225.5 248.5,209.5 251.0,225.5 252.0,225.5 255.5,210.5 258.0,225.5 259.0,225.5 261.5,209.5 264.0,225.5 265.0,225.5 267.5,209.5 270.0,226.5 271.0,226.5 272.5,209.5 275.0,224.5 276.0,224.5 278.5,209.5 281.0,224.5 282.0,224.5 283.5,209.5 286.0,226.5 287.0,226.5 289.5,210.5 292.0,226.5 293.0,226.5 295.5,210.5 298.0,225.5 299.0,225.5 301.5,209.5 303.0,225.5 304.5,209.5 307.0,225.5 308.0,225.5 310.5,210.5 312.0,224.5 313.5,209.5 315.5,225.5 317.5,209.5 320.0,225.5 321.0,225.5 322.5,209.5 324.0,225.5 325.5,209.5 328.0,225.5 329.0,225.5 331.5,209.5 334.0,225.5 335.0,225.5 337.5,211.5 340.0,225.5 341.0,225.5 343.5,209.5 345.0,225.5 346.5,209.5 348.0,226.5 349.5,209.5 351.0,226.5 352.5,211.5 355.0,226.5 356.0,226.5 358.5,209.5 361.0,225.5 362.0,225.5 364.5,209.5 367.0,224.5 368.0,224.5 370.5,209.5 373.0,225.5 374.0,225.5 376.5,211.5 379.0,226.5 380.0,226.5 382.5,210.5 384.0,225.5 385.5,210.5 387.5,225.5 389.5,209.5 391.5,224.5 393.5,209.5 396.0,226.5 397.0,226.5 399.5,209.5 402.0,224.5 403.0,224.5 405.5,210.5 407.5,224.5 409.5,209.5 412.0,225.5 413.0,225.5 415.5,209.5 418.0,224.5 419.0,224.5 420.5,211.5 422.0,225.5 423.5,209.5 426.0,225.5 427.0,225.5 429.5,209.5 432.0,225.5 433.0,225.5 435.5,210.5 438.0,225.5 439.0,225.5 440.5,209.5 442.5,225.5 444.5,209.5 446.5,224.5"/>
<path fill="#f4f400" d="M56 444h1v1h-1zM57 444h1v1h-1zM58 444h1v1h-1zM59 444h1v1h-1zM61 444h1v1h-1zM62 444h1v1h-1zM63 444h1v1h-1zM64 445h1v1h-1zM65 444h1v1h-1zM67 444h1v1h-1zM68 444h1v1h-1zM69 444h1v1h-1zM70 444h1v1h-1zM71 444h1v1h-1zM74 444h1v1h-1zM75 444h1v1h-1zM76 444h1v1h-1zM77 444h1v1h-1zM79 444h1v1h-1zM80 444h1v1h-1zM81 444h1v1h-1zM82 445h1v1h-1zM83 444h1v1h-1zM84 444h1v1h-1zM85 444h1v1h-1zM86 444h1v1h-1zM87 444h1v1h-1zM88 444h1v1h-1zM89 445h1v1h-1zM90 444h1v1h-1zM91 445h1v1h-1zM92 444h1v1h-1zM94 444h1v1h-1zM97 444h1v1h-1zM98 444h1v1h-1zM99 444h1v1h-1zM100 444h1v1h-1zM101 444h1v1h-1zM102 444h1v1h-1zM103 444h1v1h-1zM104 444h1v1h-1zM105 444h1v1h-1zM106 444h1v1h-1zM107 444h1v1h-1zM108 444h1v1h-1zM109 445h1v1h-1zM111 444h1v1h-1zM112 444h1v1h-1zM113 444h1v1h-1zM114 445h1v1h-1zM116 444h1v1h-1zM117 444h1v1h-1zM118 444h1v1h-1zM119 444h1v1h-1zM120 444h1v1h-1zM121 444h1v1h-1zM122 444h1v1h-1zM126 444h1v1h-1zM127 444h1v1h-1zM128 444h1v1h-1zM129 444h1v1h-1zM132 444h1v1h-1zM133 445h1v1h-1zM134 444h1v1h-1zM136 444h1v1h-1zM137 444h1v1h-1zM138 444h1v1h-1zM139 444h1v1h-1zM140 444h1v1h-1zM141 444h1v1h-1zM142 444h1v1h-1zM143 444h1v1h-1zM144 444h1v1h-1zM145 444h1v1h-1zM146 444h1v1h-1zM147 444h1v1h-1zM148 444h1v1h-1zM149 444h1v1h-1zM150 444h1v1h-1zM152 444h1v1h-1zM156 444h1v1h-1zM157 444h1v1h-1zM159 444h1v1h-1zM160 444h1v1h-1zM161 444h1v1h-1zM162 444h1v1h-1zM163 444h1v1h-1zM164 444h1v1h-1zM165 445h1v1h-1zM166 444h1v1h-1zM167 444h1v1h-1zM168 444h1v1h-1zM169 444h1v1h-1zM170 445h1v1h-1zM171 444h1v1h-1zM172 444h1v1h-1zM173 444h1v1h-1zM174 444h1v1h-1zM175 444h1v1h-1zM177 444h1v1h-1zM182 444h1v1h-1zM183 444h1v1h-1zM184 445h1v1h-1zM186 444h1v1h-1zM187 444h1v1h-1zM190 444h1v1h-1zM201 444h1v1h-1zM216 445h1v1h-1zM219 444h1v1h-1zM246 444h1v1h-1zM56 433h1v1h-1zM57 433h1v1h-1zM58 433h1v1h-1zM59 433h1v1h-1zM60 433h1v1h-1zM61 433h1v1h-1zM62 434h1v1h-1zM63 433h1v1h-1zM65 433h1v1h-1zM66 433h1v1h-1zM68 433h1v1h-1zM69 433h1v1h-1zM70 433h1v1h-1zM71 433h1v1h-1zM72 433h1v1h-1zM73 433h1v1h-1zM74 433h1v1h-1zM75 433h1v1h-1zM76 434h1v1h-1zM77 433h1v1h-1zM79 433h1v1h-1zM80 433h1v1h-1zM81 433h1v1h-1zM82 433h1v1h-1zM83 433h1v1h-1zM84 433h1v1h-1zM85 433h1v1h-1zM86 433h1v1h-1zM87 433h1v1h-1zM88 433h1v1h-1zM89 433h1v1h-1zM91 433h1v1h-1zM92 433h1v1h-1zM93 433h1v1h-1zM94 433h1v1h-1zM95 433h1v1h-1zM96 433h1v1h-1zM97 434h1v1h-1zM98 433h1v1h-1zM100 434h1v1h-1zM101 433h1v1h-1zM102 433h1v1h-1zM103 433h1v1h-1zM104 433h1v1h-1zM105 433h1v1h-1zM106 433h1v1h-1zM107 434h1v1h-1zM108 433h1v1h-1zM109 434h1v1h-1zM110 433h1v1h-1zM111 433h1v1h-1zM112 433h1v1h-1zM113 433h1v1h-1zM115 434h1v1h-1zM116 433h1v1h-1zM117 433h1v1h-1zM119 433h1v1h-1zM120 433h1v1h-1zM121 433h1v1h-1zM122 433h1v1h-1zM123 433h1v1h-1zM124 433h1v1h-1zM125 433h1v1h-1zM126 433h1v1h-1zM127 433h1v1h-1zM128 433h1v1h-1zM129 433h1v1h-1zM130 433h1v1h-1zM131 433h1v1h-1zM132 433h1v1h-1zM134 433h1v1h-1zM135 433h1v1h-1zM136 433h1v1h-1zM137 433h1v1h-1zM138 433h1v1h-1zM139 433h1v1h-1zM140 433h1v1h-1zM141 433h1v1h-1zM142 433h1v1h-1zM143 433h1v1h-1zM144 433h1v1h-1zM145 433h1v1h-1zM146 434h1v1h-1zM147 433h1v1h-1zM148 433h1v1h-1zM149 433h1v1h-1zM150 433h1v1h-1zM151 433h1v1h-1zM152 433h1v1h-1zM153 433h1v1h-1zM154 433h1v1h-1zM155 433h1v1h-1zM156 433h1v1h-1zM157 433h1v1h-1zM158 433h1v1h-1zM159 434h1v1h-1zM161 433h1v1h-1zM162 433h1v1h-1zM163 433h1v1h-1zM164 433h1v1h-1zM165 433h1v1h-1zM166 433h1v1h-1zM167 434h1v1h-1zM168 434h1v1h-1zM169 433h1v1h-1zM176 433h1v1h-1zM182 434h1v1h-1zM185 433h1v1h-1zM189 434h1v1h-1zM193 433h1v1h-1zM194 433h1v1h-1zM195 433h1v1h-1zM198 434h1v1h-1zM200 433h1v1h-1zM203 433h1v1h-1zM204 433h1v1h-1zM208 434h1v1h-1zM219 434h1v1h-1zM221 433h1v1h-1zM238 433h1v1h-1zM250 434h1v1h-1zM256 434h1v1h-1zM261 433h1v1h-1zM77 423h1v1h-1zM95 423h1v1h-1zM103 422h1v1h-1zM110 423h1v1h-1zM114 422h1v1h-1zM132 422h1v1h-1zM134 423h1v1h-1zM135 422h1v1h-1zM137 423h1v1h-1zM140 423h1v1h-1zM141 422h1v1h-1zM145 422h1v1h-1zM148 422h1v1h-1zM151 422h1v1h-1zM154 422h1v1h-1zM155 422h1v1h-1zM157 422h1v1h-1zM159 422h1v1h-1zM160 422h1v1h-1zM162 422h1v1h-1zM164 422h1v1h-1zM165 423h1v1h-1zM167 422h1v1h-1zM168 422h1v1h-1zM169 422h1v1h-1zM170 422h1v1h-1zM172 422h1v1h-1zM173 422h1v1h-1zM174 422h1v1h-1zM178 422h1v1h-1zM180 423h1v1h-1zM181 423h1v1h-1zM184 422h1v1h-1zM185 422h1v1h-1zM189 423h1v1h-1zM190 422h1v1h-1zM191 422h1v1h-1zM192 423h1v1h-1zM193 422h1v1h-1zM194 422h1v1h-1zM195 422h1v1h-1zM200 422h1v1h-1zM201 422h1v1h-1zM203 422h1v1h-1zM204 423h1v1h-1zM205 422h1v1h-1zM208 422h1v1h-1zM209 422h1v1h-1zM210 422h1v1h-1zM218 422h1v1h-1zM220 422h1v1h-1zM221 422h1v1h-1zM222 422h1v1h-1zM223 422h1v1h-1zM227 423h1v1h-1zM231 422h1v1h-1zM232 422h1v1h-1zM233 422h1v1h-1zM235 422h1v1h-1zM237 423h1v1h-1zM242 422h1v1h-1zM243 422h1v1h-1zM244 422h1v1h-1zM247 423h1v1h-1zM248 422h1v1h-1zM250 422h1v1h-1zM255 422h1v1h-1zM258 422h1v1h-1zM261 422h1v1h-1zM263 423h1v1h-1zM264 422h1v1h-1zM265 422h1v1h-1zM267 422h1v1h-1zM276 423h1v1h-1zM277 422h1v1h-1zM278 422h1v1h-1zM281 422h1v1h-1zM282 422h1v1h-1zM283 422h1v1h-1zM284 422h1v1h-1zM285 422h1v1h-1zM287 422h1v1h-1zM289 423h1v1h-1zM290 422h1v1h-1zM293 422h1v1h-1zM294 422h1v1h-1zM296 422h1v1h-1zM297 422h1v1h-1zM298 423h1v1h-1zM299 422h1v1h-1zM301 422h1v1h-1zM302 422h1v1h-1zM304 422h1v1h-1zM306 422h1v1h-1zM308 422h1v1h-1zM309 423h1v1h-1zM310 422h1v1h-1zM311 422h1v1h-1zM312 422h1v1h-1zM314 422h1v1h-1zM315 422h1v1h-1zM318 423h1v1h-1zM319 422h1v1h-1zM320 422h1v1h-1zM324 423h1v1h-1zM326 422h1v1h-1zM329 422h1v1h-1zM345 422h1v1h-1zM346 422h1v1h-1zM348 422h1v1h-1zM349 422h1v1h-1zM350 422h1v1h-1zM351 422h1v1h-1zM352 423h1v1h-1zM353 422h1v1h-1zM355 423h1v1h-1zM359 422h1v1h-1zM362 422h1v1h-1zM363 422h1v1h-1zM365 422h1v1h-1zM366 422h1v1h-1zM369 423h1v1h-1zM371 422h1v1h-1zM377 422h1v1h-1zM388 422h1v1h-1zM389 422h1v1h-1zM391 422h1v1h-1zM393 422h1v1h-1zM403 422h1v1h-1zM413 422h1v1h-1zM423 422h1v1h-1zM80 411h1v1h-1zM81 412h1v1h-1zM82 411h1v1h-1zM85 411h1v1h-1zM95 411h1v1h-1zM107 411h1v1h-1zM116 411h1v1h-1zM117 412h1v1h-1zM124 411h1v1h-1zM127 411h1v1h-1zM129 411h1v1h-1zM131 411h1v1h-1zM132 411h1v1h-1zM133 411h1v1h-1zM134 412h1v1h-1zM135 411h1v1h-1zM137 411h1v1h-1zM146 411h1v1h-1zM148 411h1v1h-1zM149 411h1v1h-1zM151 411h1v1h-1zM152 411h1v1h-1zM153 411h1v1h-1zM154 412h1v1h-1zM155 411h1v1h-1zM156 411h1v1h-1zM157 411h1v1h-1zM158 411h1v1h-1zM159 411h1v1h-1zM160 411h1v1h-1zM161 412h1v1h-1zM162 412h1v1h-1zM163 411h1v1h-1zM164 411h1v1h-1zM165 412h1v1h-1zM166 411h1v1h-1zM167 411h1v1h-1zM172 411h1v1h-1zM173 411h1v1h-1zM174 411h1v1h-1zM175 411h1v1h-1zM176 411h1v1h-1zM178 412h1v1h-1zM179 412h1v1h-1zM180 411h1v1h-1zM181 411h1v1h-1zM182 411h1v1h-1zM183 411h1v1h-1zM184 411h1v1h-1zM185 411h1v1h-1zM186 411h1v1h-1zM188 411h1v1h-1zM189 411h1v1h-1zM191 412h1v1h-1zM192 411h1v1h-1zM194 411h1v1h-1zM195 411h1v1h-1zM196 411h1v1h-1zM197 412h1v1h-1zM198 411h1v1h-1zM199 412h1v1h-1zM201 411h1v1h-1zM202 411h1v1h-1zM203 411h1v1h-1zM210 412h1v1h-1zM211 411h1v1h-1zM213 411h1v1h-1zM214 411h1v1h-1zM215 411h1v1h-1zM216 412h1v1h-1zM217 411h1v1h-1zM218 411h1v1h-1zM219 412h1v1h-1zM220 411h1v1h-1zM222 412h1v1h-1zM223 412h1v1h-1zM224 412h1v1h-1zM226 411h1v1h-1zM227 411h1v1h-1zM229 411h1v1h-1zM230 411h1v1h-1zM231 411h1v1h-1zM233 411h1v1h-1zM234 411h1v1h-1zM235 411h1v1h-1zM236 411h1v1h-1zM238 411h1v1h-1zM239 411h1v1h-1zM240 411h1v1h-1zM241 411h1v1h-1zM242 411h1v1h-1zM243 411h1v1h-1zM244 411h1v1h-1zM245 411h1v1h-1zM246 411h1v1h-1zM247 411h1v1h-1zM248 411h1v1h-1zM249 411h1v1h-1zM250 411h1v1h-1zM251 411h1v1h-1zM252 411h1v1h-1zM253 411h1v1h-1zM254 411h1v1h-1zM257 411h1v1h-1zM259 411h1v1h-1zM260 411h1v1h-1zM261 411h1v1h-1zM262 411h1v1h-1zM263 411h1v1h-1zM264 411h1v1h-1zM265 411h1v1h-1zM267 411h1v1h-1zM268 411h1v1h-1zM269 411h1v1h-1zM270 411h1v1h-1zM271 412h1v1h-1zM272 411h1v1h-1zM274 411h1v1h-1zM275 412h1v1h-1zM276 411h1v1h-1zM278 411h1v1h-1zM279 411h1v1h-1zM280 411h1v1h-1zM281 412h1v1h-1zM282 411h1v1h-1zM283 411h1v1h-1zM284 411h1v1h-1zM285 411h1v1h-1zM286 411h1v1h-1zM287 411h1v1h-1zM288 411h1v1h-1zM290 412h1v1h-1zM291 411h1v1h-1zM292 411h1v1h-1zM293 411h1v1h-1zM294 411h1v1h-1zM295 411h1v1h-1zM296 411h1v1h-1zM298 411h1v1h-1zM300 412h1v1h-1zM303 412h1v1h-1zM304 412h1v1h-1zM305 412h1v1h-1zM306 412h1v1h-1zM307 411h1v1h-1zM308 411h1v1h-1zM309 411h1v1h-1zM311 411h1v1h-1zM312 411h1v1h-1zM313 412h1v1h-1zM314 411h1v1h-1zM315 411h1v1h-1zM316 411h1v1h-1zM319 411h1v1h-1zM320 411h1v1h-1zM322 411h1v1h-1zM323 411h1v1h-1zM324 411h1v1h-1zM325 411h1v1h-1zM326 411h1v1h-1zM327 412h1v1h-1zM328 411h1v1h-1zM329 411h1v1h-1zM338 411h1v1h-1zM340 412h1v1h-1zM346 411h1v1h-1zM347 412h1v1h-1zM355 411h1v1h-1zM356 411h1v1h-1zM370 411h1v1h-1zM371 411h1v1h-1zM372 411h1v1h-1zM374 411h1v1h-1zM375 411h1v1h-1zM377 411h1v1h-1zM378 411h1v1h-1zM381 411h1v1h-1zM382 411h1v1h-1zM383 411h1v1h-1zM386 411h1v1h-1zM387 411h1v1h-1zM388 411h1v1h-1zM389 412h1v1h-1zM420 411h1v1h-1zM261 401h1v1h-1zM265 400h1v1h-1zM274 401h1v1h-1zM314 400h1v1h-1zM326 400h1v1h-1zM374 400h1v1h-1zM289 402h1v1h-1z"/>
<rect x="485.5" y="157.5" width="72" height="20" rx="3" fill="url(#gStart)" stroke="#3c7fb1"/>
<rect x="486.5" y="158.5" width="70" height="18" rx="2" fill="none" stroke="#48dcff" stroke-width="1.2"/>
<text x="521" y="171.9" font-size="10.5" fill="#000" font-weight="400" text-anchor="middle" >Start</text>
<rect x="476" y="188" width="101" height="1" fill="#a0a0a0" />
<rect x="476" y="227" width="101" height="1" fill="#a0a0a0" />
<rect x="476" y="299" width="101" height="1" fill="#a0a0a0" />
<rect x="476" y="403" width="101" height="1" fill="#a0a0a0" />
<defs><radialGradient id="gRad" cx="0.45" cy="0.4" r="0.6"><stop offset="0" stop-color="#7ad8ff"/><stop offset="0.5" stop-color="#2a98d8"/><stop offset="1" stop-color="#103a70"/></radialGradient><radialGradient id="gRadE" cx="0.5" cy="0.5" r="0.5"><stop offset="0" stop-color="#f4f4f4"/><stop offset="1" stop-color="#d4d4d4"/></radialGradient></defs>
<circle cx="487" cy="201" r="6" fill="#fff" stroke="#8e8f8f"/>
<circle cx="487" cy="201" r="3.3" fill="url(#gRad)" stroke="#12305a" stroke-width="0.9"/>
<text x="497.5" y="204.7" font-size="10.5" fill="#000" font-weight="400" text-anchor="start" >Read</text>
<circle cx="487" cy="217" r="6" fill="#fff" stroke="#8e8f8f"/>
<circle cx="487" cy="217" r="4.3" fill="url(#gRadE)"/>
<text x="497.5" y="220.6" font-size="10.5" fill="#000" font-weight="400" text-anchor="start" >Write</text>
<rect x="481.5" y="235.5" width="12" height="12" fill="#f4f4f4" stroke="#8e8f8f"/>
<rect x="483.5" y="237.5" width="8" height="8" fill="#dcdcdc" stroke="#c4c4c4"/>
<text x="497.5" y="245.8" font-size="10.5" fill="#000" font-weight="400" text-anchor="start" >Short stroke</text>
<rect x="481.5" y="255.5" width="61" height="19" fill="#fff" stroke="#b0b0b0"/>
<text x="484" y="268.8" font-size="10.5" fill="#8a8a8a" font-weight="400" text-anchor="start" >40</text>
<rect x="526.5" y="256.5" width="14" height="8" fill="#f0f0f0" stroke="#cfcfcf"/>
<rect x="526.5" y="265.5" width="14" height="8" fill="#f0f0f0" stroke="#cfcfcf"/>
<path d="M530.5 262 L533.5 259 L536.5 262 Z" fill="#a8a8a8"/>
<path d="M530.5 268 L533.5 271 L536.5 268 Z" fill="#a8a8a8"/>
<text x="553.2" y="268.8" font-size="10.5" fill="#000" font-weight="400" text-anchor="start" >gB</text>
<rect x="481.5" y="284.5" width="12" height="12" fill="#f4f4f4" stroke="#8e8f8f"/>
<rect x="483.5" y="286.5" width="8" height="8" fill="#dcdcdc" stroke="#c4c4c4"/>
<path d="M484 290.5 L486.3 293.8 L491 286.8" stroke="#3c4c9c" stroke-width="1.9" fill="none"/>
<text x="497.5" y="294.7" font-size="10.5" fill="#000" font-weight="400" text-anchor="start" >Transfer rate</text>
<text x="481.3" y="312.9" font-size="10.5" fill="#000" font-weight="400" text-anchor="start" >Minimum</text>
<rect x="481" y="317" width="92" height="15" fill="#a0a0a0" />
<rect x="482" y="318" width="91" height="14" fill="#000" />
<text x="528" y="329.2" font-size="12.5" fill="#14c4f6" font-weight="700" text-anchor="middle" >29.0 MB/s</text>
<text x="481.3" y="345.7" font-size="10.5" fill="#000" font-weight="400" text-anchor="start" >Maximum</text>
<rect x="481" y="349" width="92" height="15" fill="#a0a0a0" />
<rect x="482" y="350" width="91" height="14" fill="#000" />
<text x="528" y="361.2" font-size="12.5" fill="#14c4f6" font-weight="700" text-anchor="middle" >31.2 MB/s</text>
<text x="481.3" y="375.6" font-size="10.5" fill="#000" font-weight="400" text-anchor="start" >Average</text>
<rect x="481" y="380" width="92" height="15" fill="#a0a0a0" />
<rect x="482" y="381" width="91" height="14" fill="#000" />
<text x="528" y="392.2" font-size="12.5" fill="#14c4f6" font-weight="700" text-anchor="middle" >30.1 MB/s</text>
<rect x="481.5" y="409.5" width="12" height="12" fill="#f4f4f4" stroke="#8e8f8f"/>
<rect x="483.5" y="411.5" width="8" height="8" fill="#dcdcdc" stroke="#c4c4c4"/>
<path d="M484 415.5 L486.3 418.8 L491 411.8" stroke="#3c4c9c" stroke-width="1.9" fill="none"/>
<text x="497.5" y="419.4" font-size="10.5" fill="#000" font-weight="400" text-anchor="start" >Access time</text>
<rect x="481" y="424" width="92" height="15" fill="#a0a0a0" />
<rect x="482" y="425" width="91" height="14" fill="#000" />
<text x="528" y="436.2" font-size="12.5" fill="#f0f020" font-weight="700" text-anchor="middle" >0.652 ms</text>
<rect x="481.5" y="443.5" width="12" height="12" fill="#f4f4f4" stroke="#8e8f8f"/>
<rect x="483.5" y="445.5" width="8" height="8" fill="#dcdcdc" stroke="#c4c4c4"/>
<path d="M484 449.5 L486.3 452.8 L491 445.8" stroke="#3c4c9c" stroke-width="1.9" fill="none"/>
<text x="497.5" y="453.3" font-size="10.5" fill="#000" font-weight="400" text-anchor="start" >Burst rate</text>
<rect x="481" y="458" width="92" height="15" fill="#a0a0a0" />
<rect x="482" y="459" width="91" height="14" fill="#000" />
<text x="528" y="470.2" font-size="12.5" fill="#ffffff" font-weight="700" text-anchor="middle" >31.2 MB/s</text>
<text x="481.3" y="486.1" font-size="10.5" fill="#000" font-weight="400" text-anchor="start" >CPU usage</text>
<rect x="481" y="491" width="92" height="15" fill="#a0a0a0" />
<rect x="482" y="492" width="91" height="14" fill="#000" />
<text x="528" y="503.2" font-size="12.5" fill="#ffffff" font-weight="700" text-anchor="middle" >1.3%</text>
</svg></body></html>
